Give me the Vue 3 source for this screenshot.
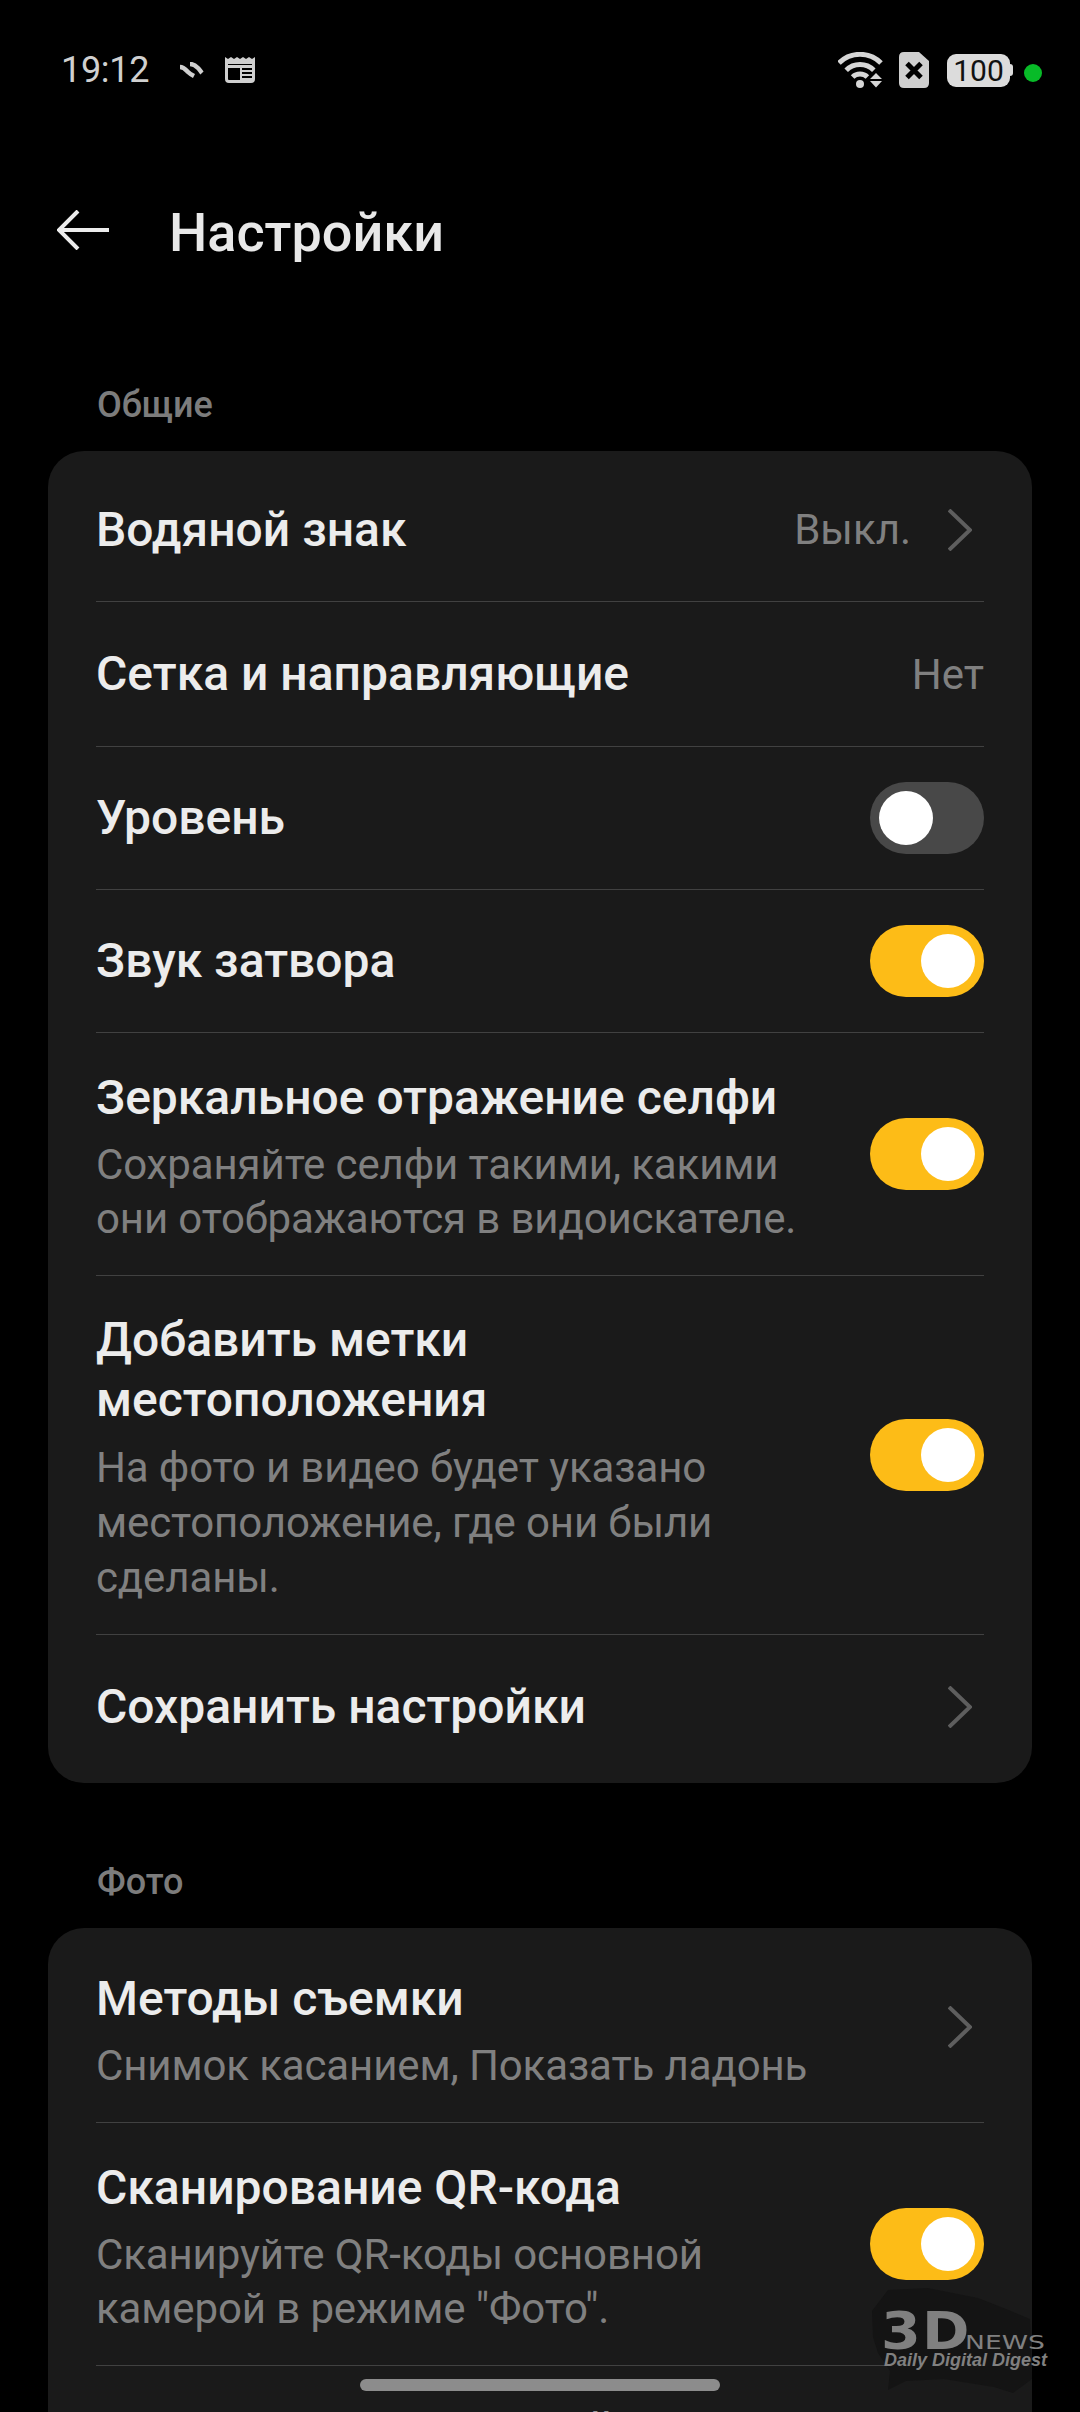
<template>
    <div class="screen">
        <header class="status-bar">
            <div class="status-left">
                <span class="clock">19:12</span>
                <svg class="sync-icon" viewBox="0 0 26 16" width="26" height="16">
                    <path d="M2 5 C6 5 8 8 10 10 C12 12 14 13 16 14" />
                    <path d="M12 2 C16 2 18 4 20 6 C22 8 23 10 24 11" />
                </svg>
                <svg class="news-icon" viewBox="0 0 30 26" width="30" height="26">
                    <path class="news-top" d="M0 0 L3 2 L6 0 L9 2 L12 0 L15 2 L18 0 L21 2 L24 0 L27 2 L30 0 V7 H0 Z" />
                    <path class="news-frame" d="M1.500 6 V22 Q1.500 24.500 4 24.500 H26 Q28.500 24.500 28.500 22 V6" />
                    <path class="news-frame" d="M1 9.500 H29" />
                    <rect x="15" y="10" width="2" height="14" fill="#cfcfcf" />
                    <path class="news-lines" d="M17 14 H29 M17 18 H29 M17 22 H29" />
                </svg>
            </div>
            <div class="status-right">
                <svg class="wifi-icon" viewBox="0 0 46 36" width="46" height="36">
                    <path d="M1 11 A29.800 29.800 0 0 1 43 11" />
                    <path d="M8.200 18.200 A19.500 19.500 0 0 1 35.800 18.200" />
                    <path d="M14.600 25 A10.500 10.500 0 0 1 29.400 25" />
                    <circle class="wifi-dot" cx="22" cy="32" r="4" />
                    <path class="wifi-arrows" d="M38 21 L44 27 H32 Z M32 29 H44 L38 35.500 Z" />
                </svg>
                <div class="sim-icon">
                    <svg viewBox="0 0 30 36" width="30" height="36">
                        <path class="sim-body" d="M5 0 H20 L30 9 V31 Q30 36 25 36 H5 Q0 36 0 31 V5 Q0 0 5 0 Z" />
                        <path class="sim-x" d="M8 11.500 L22 25.500 M22 11.500 L8 25.500" />
                    </svg>
                </div>
                <div class="battery">
                    <span class="battery-body">100</span>
                    <span class="battery-tip"></span>
                </div>
                <span class="green-dot"></span>
            </div>
        </header>

        <div class="title-bar">
            <svg class="back-icon" viewBox="0 0 52 40" width="52" height="40">
                <path d="M2 20 H52 M21 1 L2 20 L21 39" />
            </svg>
            <h1>Настройки</h1>
        </div>

        <section v-for="group in groups"
                 :key="group.title"
                 class="group">
            <h2>{{ group.title }}</h2>

            <div class="card">
                <div v-for="row in group.rows"
                     :key="row.label"
                     class="row"
                     :class="row.kind">
                    <div class="row-text">
                        <strong v-html="row.label"></strong>
                        <p v-if="row.hint" v-html="row.hint"></p>
                    </div>

                    <div class="row-side">
                        <span v-if="row.value" class="row-value">{{ row.value }}</span>
                        <svg v-if="row.arrow" class="chevron" viewBox="0 0 24 42" width="24" height="42">
                            <path d="M1 1 L22 21 L1 41" />
                        </svg>
                        <span v-if="row.toggle" class="toggle" :class="row.toggle">
                            <span class="knob"></span>
                        </span>
                    </div>
                </div>
            </div>
        </section>

        <div class="home-bar"></div>

        <div class="watermark">
            <svg class="wm-blob" viewBox="0 0 162 108" width="162" height="108">
                <path d="M3 50 L2 24 L18 3 L58 1 L108 11 L136 22 L160 32 L162 92 L143 106 L124 100 L74 92 L36 94 L18 103 L20 84 L8 66 Z" />
            </svg>
            <span class="wm-3d">3D</span>
            <span class="wm-news">NEWS</span>
            <span class="wm-sub">Daily Digital Digest</span>
        </div>
    </div>
</template>

<script setup>
const groups = [
  {
    title: "Общие",
    rows: [
      { label: "Водяной знак", value: "Выкл.", arrow: true, kind: "first" },
      { label: "Сетка и направляющие", value: "Нет", kind: "second" },
      { label: "Уровень", toggle: "off" },
      { label: "Звук затвора", toggle: "on" },
      {
        label: "Зеркальное отражение селфи",
        hint: "Сохраняйте селфи такими, какими<br>они отображаются в видоискателе.",
        toggle: "on",
        kind: "tall",
      },
      {
        label: "Добавить метки<br>местоположения",
        hint: "На фото и видео будет указано<br>местоположение, где они были<br>сделаны.",
        toggle: "on",
        kind: "tall long",
      },
      { label: "Сохранить настройки", arrow: true, kind: "last" },
    ],
  },
  {
    title: "Фото",
    rows: [
      {
        label: "Методы съемки",
        hint: "Снимок касанием, Показать ладонь",
        arrow: true,
        kind: "tall top",
      },
      {
        label: "Сканирование QR-кода",
        hint: "Сканируйте QR-коды основной<br>камерой в режиме \"Фото\".",
        toggle: "on",
        kind: "tall",
      },
      // строка срезана краем экрана, видны только верхушки букв
      { label: "Меню съемки кнопкой", kind: "cut" },
    ],
  },
];
</script>

<style>
html,
body {
    margin: 0;
    background: #000;
}
</style>

<style scoped>
    .screen {
        position: relative;
        width: 1080px;
        height: 2412px;
        overflow: hidden;
        background: #000;
        color: #ececec;
        font-family: Roboto, "Noto Sans", sans-serif;
    }

    .status-bar {
        height: 183px;
        padding-left: 61px;
        display: flex;
        justify-content: space-between;
        align-items: flex-start;
        box-sizing: border-box;
    }

    .status-left {
        height: 72px;
        margin-top: 34px;
        display: flex;
        align-items: center;
    }

    .clock {
        width: 117px;
        font-size: 36px;
        letter-spacing: -0.3px;
        color: #d0d0d0;
    }

    .sync-icon {
        fill: none;
        stroke: #cfcfcf;
        stroke-width: 4.5;
    }

    .news-icon {
        margin-left: 21px;
    }

    .news-top {
        fill: #cfcfcf;
    }

    .news-frame {
        fill: none;
        stroke: #cfcfcf;
        stroke-width: 3;
    }

    .news-lines {
        fill: none;
        stroke: #cfcfcf;
        stroke-width: 2;
    }

    .status-right {
        height: 72px;
        margin-top: 34px;
        padding-right: 38px;
        display: flex;
        align-items: center;
    }

    .wifi-icon {
        fill: none;
        stroke: #d6d6d6;
        stroke-width: 5;
    }

    .wifi-dot,
    .wifi-arrows {
        fill: #d6d6d6;
        stroke: none;
    }

    .sim-icon {
        margin-left: 15px;
        display: flex;
    }

    .sim-body {
        fill: #cfcfcf;
    }

    .sim-x {
        fill: none;
        stroke: #000;
        stroke-width: 5;
    }

    .battery {
        margin-left: 18px;
        display: flex;
        align-items: center;
    }

    .battery-body {
        width: 63px;
        height: 33px;
        border-radius: 9px;
        background: #dcdcdc;
        color: #111;
        font-size: 30px;
        line-height: 33px;
        text-align: center;
    }

    .battery-tip {
        width: 3px;
        height: 12px;
        border-radius: 0 3px 3px 0;
        background: #dcdcdc;
    }

    .green-dot {
        width: 18px;
        height: 18px;
        margin: 5px 0 0 11px;
        border-radius: 50%;
        background: #08bb28;
    }

    .title-bar {
        height: 94px;
        display: flex;
        align-items: center;
        padding-left: 57px;
    }

    .back-icon {
        fill: none;
        stroke: #ececec;
        stroke-width: 4;
    }

    .title-bar h1 {
        margin: 4px 0 0 60px;
        font-size: 54px;
        font-weight: 500;
        color: #e8e8e8;
    }

    .group h2 {
        height: 174px;
        margin: 0;
        padding: 0 0 25px 97px;
        display: flex;
        align-items: flex-end;
        box-sizing: border-box;
        font-size: 36px;
        line-height: 42px;
        font-weight: 500;
        color: #7c7c7c;
    }

    .group + .group h2 {
        height: 145px;
    }

    .card {
        margin: 0 48px;
        padding: 0 48px;
        background: #1a1a1a;
        border-radius: 36px;
    }

    .row {
        min-height: 143px;
        display: flex;
        align-items: center;
        justify-content: space-between;
        box-sizing: border-box;
        border-bottom: 1px solid #414141;
    }

    .row.first {
        min-height: 151px;
        padding-top: 7px;
    }

    .row.second {
        min-height: 145px;
    }

    .row.last {
        min-height: 148px;
        padding-bottom: 5px;
        border-bottom: none;
    }

    .row.tall .row-text {
        padding: 35px 0 29px;
    }

    .row.long .row-text {
        padding-top: 34px;
    }

    .row.long p {
        line-height: 55px;
    }

    .row.top .row-text {
        padding: 41px 0 29px;
    }

    .row.top .chevron {
        margin-top: 4px;
    }

    .row.cut {
        align-items: flex-start;
        padding-top: 35px;
        border-bottom: none;
    }

    .row-text strong {
        display: block;
        font-size: 48px;
        line-height: 60px;
        font-weight: 500;
        color: #ececec;
    }

    .row-text p {
        margin: 10px 0 0;
        font-size: 42px;
        line-height: 54px;
        letter-spacing: -0.12px;
        color: #808080;
    }

    .row-side {
        display: flex;
        align-items: center;
    }

    .row-value {
        font-size: 42px;
        color: #808080;
    }

    .chevron {
        margin: 0 12px 0 37px;
        fill: none;
        stroke: #5e5e5e;
        stroke-width: 4;
    }

    .toggle {
        width: 114px;
        height: 72px;
        padding: 9px;
        display: flex;
        align-items: center;
        box-sizing: border-box;
        border-radius: 36px;
        background: #484848;
    }

    .toggle.on {
        justify-content: flex-end;
        background: #fdbc17;
    }

    .knob {
        width: 54px;
        height: 54px;
        border-radius: 50%;
        background: #fff;
    }

    .home-bar {
        position: absolute;
        left: 360px;
        bottom: 21px;
        width: 360px;
        height: 12px;
        border-radius: 6px;
        background: #8c8c8c;
    }

    .watermark {
        position: absolute;
        left: 870px;
        top: 2287px;
        width: 180px;
        height: 110px;
        color: #808080;
        font-family: "DejaVu Sans", sans-serif;
        font-weight: 700;
        white-space: nowrap;
    }

    .wm-blob {
        display: block;
        fill: #141414;
    }

    .wm-3d {
        position: absolute;
        left: 11px;
        top: 24px;
        font-size: 52px;
        line-height: 40px;
        letter-spacing: 1px;
        transform: scaleX(1.1);
        transform-origin: left center;
    }

    .wm-news {
        position: absolute;
        left: 95px;
        top: 46px;
        font-size: 20px;
        line-height: 18px;
        font-weight: 400;
        transform: scaleX(1.33);
        transform-origin: left center;
    }

    .wm-sub {
        position: absolute;
        left: 14px;
        top: 64px;
        font-family: "Liberation Sans", sans-serif;
        font-size: 18px;
        line-height: 18px;
        font-style: italic;
    }
</style>
